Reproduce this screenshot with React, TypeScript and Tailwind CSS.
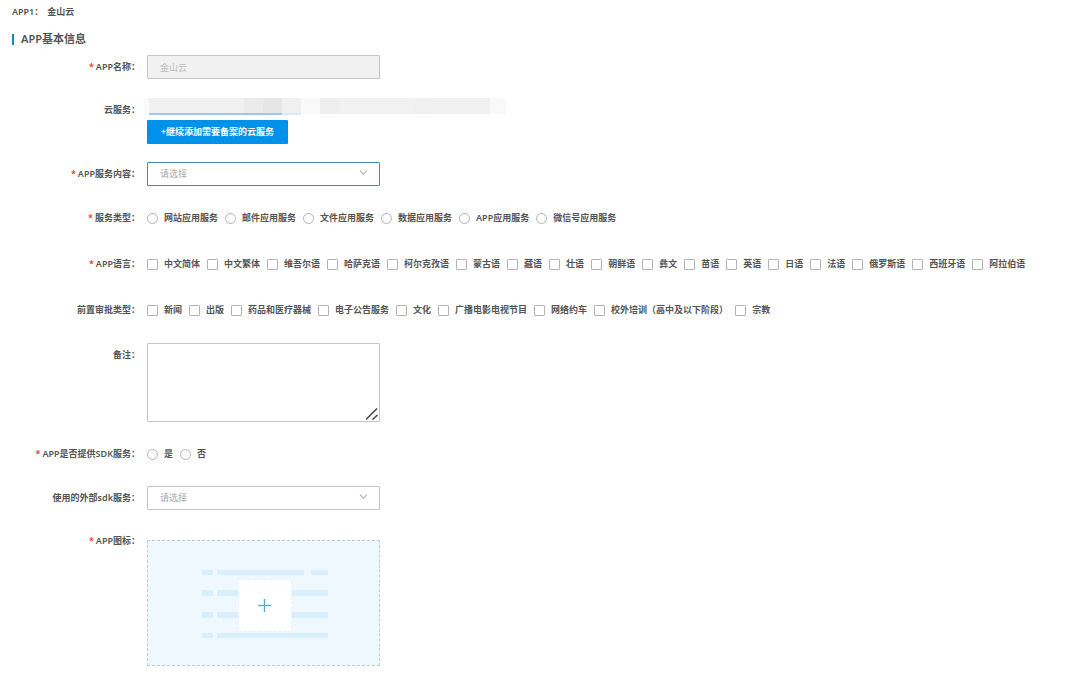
import type { ReactNode } from "react";
import { ChevronDown } from "lucide-react";

const serviceTypes = ["网站应用服务", "邮件应用服务", "文件应用服务", "数据应用服务", "APP应用服务", "微信号应用服务"];

const languages = [
  "中文简体",
  "中文繁体",
  "维吾尔语",
  "哈萨克语",
  "柯尔克孜语",
  "蒙古语",
  "藏语",
  "壮语",
  "朝鲜语",
  "彝文",
  "苗语",
  "英语",
  "日语",
  "法语",
  "俄罗斯语",
  "西班牙语",
  "阿拉伯语",
];

const approvals = [
  "新闻",
  "出版",
  "药品和医疗器械",
  "电子公告服务",
  "文化",
  "广播电影电视节目",
  "网络约车",
  "校外培训（高中及以下阶段）",
  "宗教",
];

type RowProps = {
  children: ReactNode;
  className?: string;
  htmlFor?: string;
  label: string;
  required?: boolean;
};

function Row({ children, className = "", htmlFor, label, required }: RowProps) {
  const text = (
    <>
      {required ? <span className="mr-0.5 text-[#e8392b]">*</span> : null}
      {label}：
    </>
  );

  return (
    <div className={`grid grid-cols-[140px_minmax(0,1fr)] gap-[7px] ${className}`}>
      {htmlFor ? (
        <label className="h-6 text-right leading-6" htmlFor={htmlFor}>
          {text}
        </label>
      ) : (
        <div className="h-6 text-right leading-6">{text}</div>
      )}
      <div className="min-w-0">{children}</div>
    </div>
  );
}

type OptionsProps = {
  items: string[];
  label: string;
  name: string;
  type: "checkbox" | "radio";
};

function Options({ items, label, name, type }: OptionsProps) {
  return (
    <div aria-label={label} className="flex flex-wrap gap-x-[7px]" role="group">
      {items.map((item) => (
        <label className="flex h-6 items-center gap-1.5 whitespace-nowrap" key={item}>
          <input
            className={`size-[11px] shrink-0 appearance-none border border-[#b4b4b4] bg-white checked:bg-[#0091ea] ${
              type === "radio" ? "rounded-full" : "rounded-[1px]"
            }`}
            name={name}
            type={type}
            value={item}
          />
          {item}
        </label>
      ))}
    </div>
  );
}

function Select({ active, id }: { active?: boolean; id: string }) {
  return (
    <div className="relative w-[233px] max-w-full">
      <select
        className={`block h-6 w-full appearance-none rounded-[1px] border bg-white pl-3 font-normal text-[#a8a8a8] outline-none ${
          active ? "border-[#3d8fb3]" : "border-[#c6c6c6]"
        }`}
        defaultValue=""
        id={id}
      >
        <option value="">请选择</option>
      </select>
      <ChevronDown
        className="pointer-events-none absolute top-1 right-[10px] text-[#b5b5b5]"
        size={13}
        strokeWidth={2}
      />
    </div>
  );
}

function CloudServices() {
  return (
    <div className="-ml-[3px] flex h-[17px] w-[362px] max-w-full">
      <div className="h-4 w-[5px] bg-[#fafafa]" />
      <div className="w-[95px] border-b-2 border-[#9cc6f4] bg-[#f1f1f1]" />
      <div className="w-[19px] border-b-2 border-[#9cc6f4] bg-[#ebebeb]" />
      <div className="w-[19px] border-b-2 border-[#9cc6f4] bg-[#e6e6e6]" />
      <div className="w-[19px] border-b-2 border-[#dbe9fb] bg-[#f1f1f1]" />
      <div className="h-4 w-[19px] bg-[#fafafa]" />
      <div className="h-4 w-[19px] bg-[#efefef]" />
      <div className="h-4 w-[75px] bg-[#f2f2f2]" />
      <div className="h-4 w-[19px] bg-[#f0f0f0]" />
      <div className="h-4 w-[57px] bg-[#f1f1f1]" />
      <div className="h-4 flex-1 bg-[#f9f9f9]" />
    </div>
  );
}

function UploadArt() {
  return (
    <svg aria-hidden="true" className="h-[68px] w-[126px] shrink-0" viewBox="0 0 126 68" fill="none">
      <g fill="#d9effc">
        <path d="M0 0h11v5H0zM15 0h87v5H15zM109 0h17v5h-17z" />
        <path d="M0 20h11v6H0zM15 20h111v6H15z" />
        <path d="M0 42h11v6H0zM15 42h111v6H15z" />
        <path d="M0 63h11v5H0zM15 63h111v5H15z" />
      </g>
      <rect x="36.500" y="9.500" width="53" height="52" fill="#fff" stroke="#e6f2fc" strokeDasharray="3 2" />
      <path d="M56.500 35.500h13M62.500 29v13" stroke="#d5f3fb" strokeWidth="3" />
      <path d="M56 35.500h13M62.500 29v13" stroke="#5aa9cf" />
    </svg>
  );
}

export default function App() {
  return (
    <main className="min-h-screen bg-white pb-4 font-['Noto_Sans','Noto_Sans_CJK_SC',sans-serif] text-[9px] font-semibold text-[#555]">
      <div className="flex h-6 items-center gap-1 pl-3">
        <span>APP1：</span>
        <span>金山云</span>
      </div>
      <h1 className="mt-[3px] flex h-6 items-center gap-[7px] pl-3 text-[11px] font-semibold">
        <span className="h-[11px] w-0.5 bg-[#0b87d8]" />
        APP基本信息
      </h1>

      <form className="mt-1" onSubmit={(event) => event.preventDefault()}>
        <Row htmlFor="app-name" label="APP名称" required>
          <input
            className="block h-6 w-[233px] max-w-full rounded-[1px] border border-[#c6c6c6] bg-[#f1f1f1] px-3 font-normal text-[#bdbdbd]"
            defaultValue="金山云"
            disabled
            id="app-name"
            type="text"
          />
        </Row>
        <Row className="mt-[19px]" label="云服务">
          <CloudServices />
          <button
            className="mt-[5px] block h-6 w-[141px] rounded-[1px] bg-[#0091ea] text-white"
            type="button"
          >
            +继续添加需要备案的云服务
          </button>
        </Row>
        <Row className="mt-[18px]" htmlFor="service-content" label="APP服务内容" required>
          <Select active id="service-content" />
        </Row>
        <Row className="mt-5" label="服务类型" required>
          <Options items={serviceTypes} label="服务类型" name="service-type" type="radio" />
        </Row>
        <Row className="mt-[22px]" label="APP语言" required>
          <Options items={languages} label="APP语言" name="language" type="checkbox" />
        </Row>
        <Row className="mt-[22px]" label="前置审批类型">
          <Options items={approvals} label="前置审批类型" name="approval" type="checkbox" />
        </Row>
        <Row className="mt-[21px]" htmlFor="remark" label="备注">
          <div className="relative w-[233px] max-w-full">
            <textarea
              className="block h-[79px] w-full resize-none rounded-[1px] border border-[#c6c6c6] px-3 py-1 outline-none"
              id="remark"
            />
            <svg
              aria-hidden="true"
              className="pointer-events-none absolute right-0.5 bottom-0.5 size-3"
              fill="none"
              stroke="#444"
              viewBox="0 0 12 12"
            >
              <path d="M0 11.500L11 0.500M6.500 11.500L11.500 7" strokeWidth="1.500" />
            </svg>
          </div>
        </Row>
        <Row className="mt-5" label="APP是否提供SDK服务" required>
          <Options items={["是", "否"]} label="APP是否提供SDK服务" name="sdk" type="radio" />
        </Row>
        <Row className="mt-5" htmlFor="external-sdk" label="使用的外部sdk服务">
          <Select id="external-sdk" />
        </Row>
        <Row className="mt-[19px]" label="APP图标" required>
          <button
            aria-label="上传APP图标"
            className="mt-[11px] flex h-[126px] w-[233px] max-w-full items-center justify-center rounded-[1px] border border-dashed border-[#c3c9cf] bg-[#f0f8ff] pt-0.5 pl-0.5"
            type="button"
          >
            <UploadArt />
          </button>
        </Row>
      </form>
    </main>
  );
}
